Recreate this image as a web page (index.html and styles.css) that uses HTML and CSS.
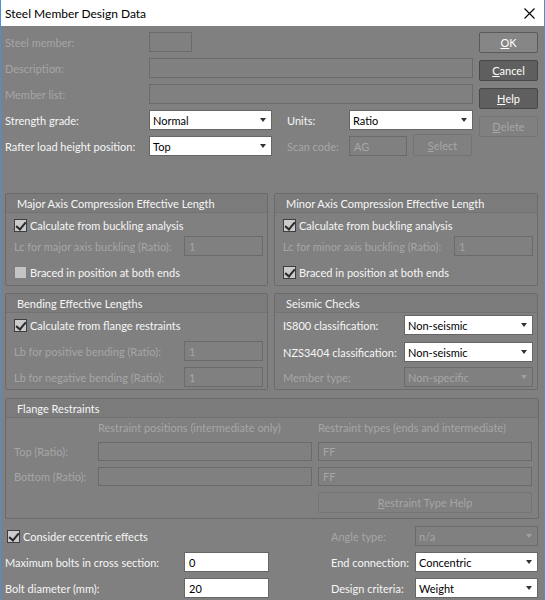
FILE: index.html
```html
<!DOCTYPE html>
<html lang="en">
<head>
    <meta charset="UTF-8">
    <title>Steel Member Design Data</title>
    <link rel="stylesheet" href="styles.css">
</head>
<body>
<div class="window">
    <div class="titlebar">
        <span class="title">Steel Member Design Data</span>
        <svg class="close" width="11" height="11" viewBox="0 0 11 11">
            <path d="M0.5 0.5 L10.5 10.5 M10.5 0.5 L0.5 10.5" stroke="#000" stroke-width="1.1" fill="none"/>
        </svg>
    </div>

    <div class="dialog">
        <div class="top">
            <div class="top-form">
                <span class="label off">Steel member:</span>
                <div class="input off short"></div>
                <span></span><span></span><span></span>

                <span class="label off">Description:</span>
                <div class="input off wide"></div>

                <span class="label off">Member list:</span>
                <div class="input off wide"></div>

                <span class="label">Strength grade:</span>
                <div class="select"><span>Normal</span><i class="arrow"></i></div>
                <span></span>
                <span class="label">Units:</span>
                <div class="select"><span>Ratio</span><i class="arrow"></i></div>

                <span class="label">Rafter load height position:</span>
                <div class="select"><span>Top</span><i class="arrow"></i></div>
                <span></span>
                <span class="label off">Scan code:</span>
                <div class="scan">
                    <div class="input off code">AG</div>
                    <div class="btn off sel"><u>S</u>elect</div>
                </div>
            </div>
            <div class="buttons">
                <div class="btn ok"><u>O</u>K</div>
                <div class="btn dark"><u>C</u>ancel</div>
                <div class="btn dark"><u>H</u>elp</div>
                <div class="btn off"><u>D</u>elete</div>
            </div>
        </div>

        <div class="groups">
            <div class="group">
                <div class="group-head">Major Axis Compression Effective Length</div>
                <div class="group-body">
                    <div class="check"><span class="box on"></span>Calculate from buckling analysis</div>
                    <div class="field"><span class="off">Lc for major axis buckling (Ratio):</span><div class="input off num">1</div></div>
                    <div class="check gap5"><span class="box"></span>Braced in position at both ends</div>
                </div>
            </div>
            <div class="group">
                <div class="group-head">Minor Axis Compression Effective Length</div>
                <div class="group-body">
                    <div class="check"><span class="box on"></span>Calculate from buckling analysis</div>
                    <div class="field"><span class="off">Lc for minor axis buckling (Ratio):</span><div class="input off num">1</div></div>
                    <div class="check gap5"><span class="box on"></span>Braced in position at both ends</div>
                </div>
            </div>
            <div class="group">
                <div class="group-head">Bending Effective Lengths</div>
                <div class="group-body">
                    <div class="check"><span class="box on"></span>Calculate from flange restraints</div>
                    <div class="field gap5"><span class="off">Lb for positive bending (Ratio):</span><div class="input off num">1</div></div>
                    <div class="field gap6"><span class="off">Lb for negative bending (Ratio):</span><div class="input off num">1</div></div>
                </div>
            </div>
            <div class="group">
                <div class="group-head">Seismic Checks</div>
                <div class="group-body">
                    <div class="field gap1"><span>IS800 classification:</span><div class="select seismic"><span>Non-seismic</span><i class="arrow"></i></div></div>
                    <div class="field gap7"><span>NZS3404 classification:</span><div class="select seismic"><span>Non-seismic</span><i class="arrow"></i></div></div>
                    <div class="field gap5"><span class="off">Member type:</span><div class="select off seismic"><span>Non-specific</span><i class="arrow"></i></div></div>
                </div>
            </div>
        </div>

        <div class="group flange">
            <div class="group-head">Flange Restraints</div>
            <div class="flange-body">
                <span></span>
                <span class="off">Restraint positions (intermediate only)</span>
                <span></span>
                <span class="off">Restraint types (ends and intermediate)</span>

                <span class="off">Top (Ratio):</span>
                <div class="input off"></div>
                <span></span>
                <div class="input off">FF</div>

                <span class="off">Bottom (Ratio):</span>
                <div class="input off"></div>
                <span></span>
                <div class="input off">FF</div>

                <span></span><span></span><span></span>
                <div class="btn off"><u>R</u>estraint Type Help</div>
            </div>
        </div>

        <div class="bottom">
            <div class="check eccentric"><span class="box on"></span>Consider eccentric effects</div>
            <span class="off">Angle type:</span>
            <div class="select off"><span>n/a</span><i class="arrow"></i></div>

            <span>Maximum bolts in cross section:</span>
            <div class="input">0</div>
            <span></span>
            <span>End connection:</span>
            <div class="select"><span>Concentric</span><i class="arrow"></i></div>

            <span>Bolt diameter (mm):</span>
            <div class="input">20</div>
            <span></span>
            <span>Design criteria:</span>
            <div class="select"><span>Weight</span><i class="arrow"></i></div>
        </div>
    </div>
</div>
</body>
</html>
```
FILE: styles.css
```css
* { box-sizing: border-box; }
html, body { margin: 0; }
body { width: 545px; height: 600px; overflow: hidden; background: #808080; font-family: Lato, "Liberation Sans", sans-serif; font-size: 11px; color: #f6f6f6; }

.window { width: 545px; height: 600px; border-left: 1px solid #4a8fd8; border-right: 1px solid #4a8fd8; background: #808080; }
.titlebar { height: 26px; background: #fff; color: #000; display: flex; align-items: center; justify-content: space-between; padding: 0 9px 0 4px; }
.title { font-size: 12px; }
.close { display: block; margin-top: 1px; }

.dialog { padding: 6px 6px 0 4px; }
.off { color: #a6a6a6; }

/* inputs and combos */
.input { height: 20px; border: 1px solid #666; background: #fff; color: #000; display: flex; align-items: center; padding-left: 4px; }
.input.off { background: #808080; border-color: #6b6b6b; color: #a6a6a6; }
.select { height: 20px; border: 1px solid #666; background: #fff; color: #000; display: flex; align-items: center; justify-content: space-between; padding: 0 5px 0 3px; }
.select.off { background: #808080; border-color: #6b6b6b; color: #a6a6a6; }
.arrow { width: 0; height: 0; border-left: 3.5px solid transparent; border-right: 3.5px solid transparent; border-top: 4px solid #333; }
.select.off .arrow { border-top-color: #a0a0a0; }

/* buttons */
.btn { height: 21px; border: 1px solid #5a5a5a; border-radius: 2px; display: flex; align-items: center; justify-content: center; color: #fff; background: #868686; }
.btn.dark { background: #5f5f5f; border-color: #474747; }
.btn.off { background: #808080; border-color: #747474; color: #a6a6a6; }

/* top area */
.top { display: flex; gap: 6px; }
.top-form { display: grid; grid-template-columns: 144px 123px 15px 62px 124px; grid-template-rows: repeat(5, 20px); row-gap: 6px; align-items: center; }
.input.short { width: 43px; }
.input.wide { grid-column: 2 / 6; }
.scan { display: flex; gap: 6px; align-items: center; }
.input.code { width: 58px; }
.btn.sel { width: 59px; height: 22px; margin-top: -2px; }
.buttons { width: 59px; display: flex; flex-direction: column; gap: 7px; }

/* group boxes */
.groups { margin-top: 37px; display: grid; grid-template-columns: 263px 264px; grid-template-rows: 93px 97px; gap: 7px 6px; }
.group { border: 1px solid #6a6a6a; border-radius: 2px; }
.group-head { height: 19px; background: #7b7b7b; border-bottom: 1px solid #727272; padding-left: 11px; display: flex; align-items: center; color: #f6f6f6; }
.group-body { padding: 1px 4px 0 8px; }

.check { display: flex; align-items: center; gap: 3px; height: 22px; }
.box { width: 13px; height: 13px; border: 1px solid #7e7e7e; background: #c4c4c4; position: relative; }
.box.on { border-color: #3e3e3e; background: #cbcbcb; }
.box.on::after { content: ""; position: absolute; left: 3px; top: 0px; width: 4px; height: 8px; border-right: 2px solid #2a2a2a; border-bottom: 2px solid #2a2a2a; transform: rotate(40deg); }

.field { display: flex; align-items: center; justify-content: space-between; height: 20px; }
.field .input { width: 79px; }
.select.seismic { width: 129px; }
.gap1 { margin-top: 1px; }
.gap5 { margin-top: 5px; }
.gap6 { margin-top: 6px; }
.gap7 { margin-top: 7px; }

/* flange restraints */
.flange { margin-top: 8px; width: 534px; }
.flange-body { display: grid; grid-template-columns: 84px 214px 6px 214px; grid-template-rows: 18px 19px 19px 21px; row-gap: 6px; align-items: center; padding: 0 6px 5px 8px; }
.flange-body .input { height: 19px; }

/* bottom rows */
.bottom { margin-top: 7px; display: grid; grid-template-columns: 179px 85px 62px 84px 123px; grid-template-rows: repeat(3, 20px); row-gap: 6px; align-items: center; }
.check.eccentric { grid-column: 1 / 4; padding-left: 2px; }
```
